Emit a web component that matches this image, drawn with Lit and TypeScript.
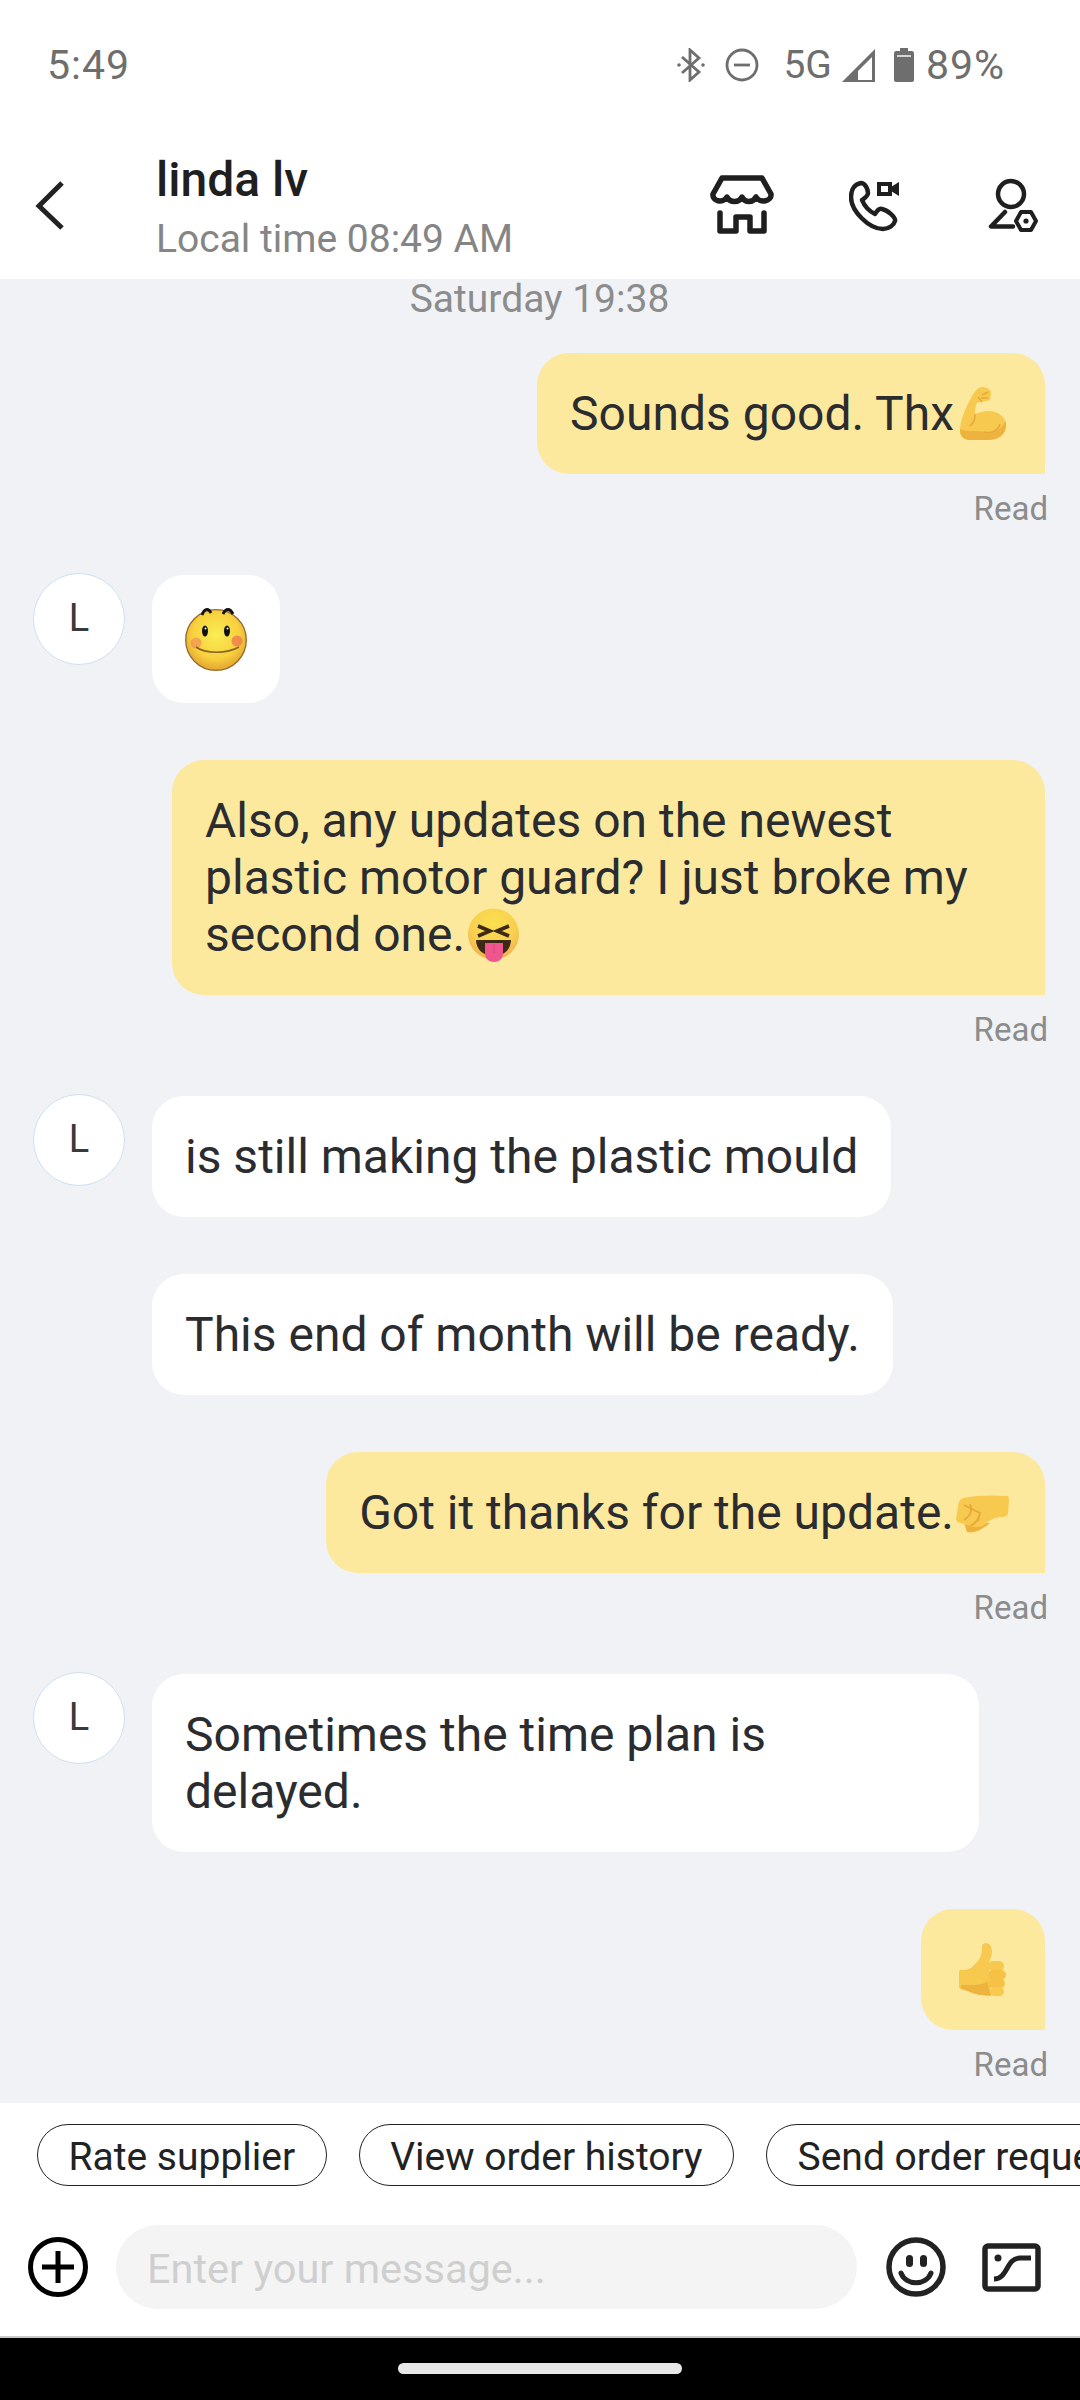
import { LitElement, html, css } from "lit";
import { customElement } from "lit/decorators.js";

const muscle = html`<svg class="emo" viewBox="0 0 58 57"><g transform="translate(6 2)">
<path fill="#f8c94f" d="M22 0C27 0 32 3 31 7L30 13C26 15 20 14 17 16C15 20 15 23 15 27C18 26 23 24 28 24C38 24 46 30 46 38C46 48 38 53 28 53L10 53C4 53 0 49 0 44C0 34 5 22 11 11C14 5 18 0 22 0Z"/>
<path fill="#eeb33f" d="M0 44C0 49 4 53 10 53L28 53C38 53 46 48 46 38C46 36 46 35 45 34C44 40 38 44 30 45L16 44C10 44 4 44 0 42Z"/>
<path fill="none" stroke="#e6a93c" stroke-width="1.6" d="M24 45C30 47 38 44 40 37M10 39C14 36 15 32 15 27M22 8L28 5M21 11L28 11M18 10L22 15"/></g></svg>`;

const tongue = html`<svg class="emo" viewBox="0 0 58 57"><defs><radialGradient id="tg" cx=".5" cy=".3" r=".75"><stop offset="0" stop-color="#fbe04f"/><stop offset=".6" stop-color="#f8cf50"/><stop offset="1" stop-color="#f0a94c"/></radialGradient></defs><g transform="translate(3 3)">
<circle cx="25.500" cy="25" r="25.500" fill="url(#tg)"/>
<path fill="none" stroke="#3e2a14" stroke-width="3.600" d="M10 17L22 22L10 27M41 17L29 22L41 27"/>
<path fill="#3e2a14" d="M8 31H43C43 40 36 47 25.500 47C15 47 8 40 8 31Z"/>
<path fill="#f0568e" d="M17 34H35V44C35 50 31 53 26 53C21 53 17 50 17 44Z"/>
<path stroke="#d3447a" stroke-width="1" d="M26 35V44"/></g></svg>`;

const fist = html`<svg class="emo" viewBox="0 0 58 57"><g transform="translate(2 11)">
<path fill="#eeb33f" d="M8 28L11 37C18 39 27 34 34 28Z"/>
<path fill="#f8c94f" d="M7 3C20 0 38 0 50 1C53 1 53 3 53 6L52 18C52 21 49 22 46 22C38 22 32 26 27 31C20 34 12 30 8 29C2 28 0 26 0 24C1 18 2 10 3 7C4 5 5 4 7 3Z"/>
<path fill="none" stroke="#e6a93c" stroke-width="1.800" d="M8 10L24 18C23 24 19 29 14 31M14 9C16 14 16 20 8 25M24 18L22 26"/></g></svg>`;

const thumb = html`<svg class="emo" viewBox="0 0 58 57"><g transform="translate(5 2)">
<path fill="#f8c94f" d="M27 0C31 0 33 4 33 9C33 13 31 16 30 20L32 52L22 52C14 51 8 47 2 46C0 46 0 44 0 42V29C0 27 1 27 2 27C8 27 12 26 15 22C21 17 23 12 23 4C23 1 25 0 27 0Z"/>
<path fill="#eeb33f" d="M2 46C8 47 14 51 22 52L32 53L28 38C24 43 12 42 2 42Z"/>
<rect x="29" y="18" width="16" height="10" rx="5" fill="#f8c94f"/>
<rect x="29" y="27" width="18" height="10" rx="5" fill="#f6c246"/>
<rect x="29" y="36" width="17" height="9" rx="4.500" fill="#f6c246"/>
<rect x="31" y="44" width="14" height="9" rx="4.500" fill="#f8c94f"/></g></svg>`;

const sticker = html`<svg class="sticker" viewBox="0 0 62 64"><defs><radialGradient id="sg" cx=".5" cy=".42" r=".6"><stop offset="0" stop-color="#f8ee55"/><stop offset=".65" stop-color="#f8d03e"/><stop offset="1" stop-color="#e0a030"/></radialGradient></defs>
<circle cx="31" cy="33" r="30.300" fill="url(#sg)" stroke="#96682a" stroke-width="1.300"/>
<circle cx="11" cy="36" r="5.500" fill="#f28a5a" opacity=".65"/><circle cx="52" cy="34" r="5.500" fill="#f07a50" opacity=".8"/>
<path fill="none" stroke="#111" stroke-width="2.800" d="M17 8C19 2 23 0 26 6M38 7C41 1 45 1 48 7"/>
<ellipse cx="20" cy="24" rx="3" ry="5.500" fill="#111"/><ellipse cx="42" cy="24" rx="3" ry="5.500" fill="#111"/>
<circle cx="20.500" cy="21.500" r="1" fill="#fff"/><circle cx="42.500" cy="21.500" r="1" fill="#fff"/>
<path fill="none" stroke="#8a6420" stroke-width="1.600" d="M11 40C20 47 42 47 54 40"/></svg>`;

@customElement("app-root")
export class AppRoot extends LitElement {
  static styles = css`
    :host { display: block; width: 1080px; height: 2400px; font-family: Roboto, "Liberation Sans", sans-serif; }
    .page { width: 1080px; height: 2400px; display: flex; flex-direction: column; background: #f0f2f6; overflow: hidden; }
    svg { display: block; flex: none; }

    .status { height: 130px; flex: none; background: #fff; display: flex; align-items: center; padding: 0 75px 0 47px; color: #6e6e6e; font-size: 41px; box-sizing: border-box; }
    .clock { margin-right: auto; letter-spacing: 1px; }
    .st-bt { margin-right: 20px; }
    .st-dnd { margin-right: 24px; }
    .st-5g { font-size: 39px; margin-right: 10px; }
    .st-sig { margin-right: 19px; }
    .st-bat { margin-right: 12px; }
    .st-pct { letter-spacing: 1px; }

    .head { height: 149px; flex: none; background: #fff; display: flex; box-sizing: border-box; padding: 0 42px 0 34px; }
    .back { width: 122px; padding-top: 51px; box-sizing: border-box; flex: none; }
    .who { display: flex; flex-direction: column; padding-top: 20px; }
    .name { font-size: 48px; font-weight: 500; line-height: 60px; color: #1f1f1f; }
    .local { font-size: 39px; line-height: 46px; margin-top: 6px; color: #858585; }
    .tools { margin-left: auto; display: flex; padding-top: 42px; height: 64px; }
    .t-store { margin-right: 75px; }
    .t-phone { margin-right: 87px; }

    .msgs { flex: 1; min-height: 0; display: flex; flex-direction: column; padding: 0 35px 0 33px; }
    .time { text-align: center; font-size: 39px; line-height: 46px; color: #8c8c8c; margin: -3px 0 31px 1px; }
    .out { display: flex; flex-direction: column; align-items: flex-end; }
    .in { display: flex; align-items: flex-start; }
    .gap-s { margin-bottom: 57px; }
    .gap-r { margin-bottom: 43px; }
    .avatar { width: 92px; height: 92px; flex: none; box-sizing: border-box; border-radius: 50%; background: #fff; border: 1px solid #cfe0ef; display: flex; align-items: center; justify-content: center; font-size: 38px; color: #3a3a3a; padding-bottom: 2px; }
    .in .bubble { margin-top: 2px; margin-left: 27px; }
    .indent { margin-left: 119px; display: flex; }
    .bubble { box-sizing: border-box; padding: 32px 33px; font-size: 48px; line-height: 57px; color: #2b2c30; border-radius: 32px; background: #fff; }
    .out .bubble { background: #fce99e; border-bottom-right-radius: 0; }
    .wide { width: 827px; }
    .big { width: 873px; }
    .pic { width: 128px; height: 128px; padding: 32px 0 0 33px; }
    .sticker { width: 62px; height: 64px; }
    .emo { display: inline-block; width: 58px; height: 57px; vertical-align: top; }
    .read { font-size: 33px; line-height: 42px; margin: 14px -3px 0 0; color: #8c8c8c; }

    .foot { flex: none; background: #fff; padding-top: 21px; }
    .chips { display: flex; gap: 32px; padding-left: 37px; overflow: hidden; }
    .chip { flex: none; box-sizing: border-box; height: 62px; border: 1.500px solid #222; border-radius: 31px; padding: 0 30.500px; font-size: 39px; line-height: 64px; color: #222; white-space: nowrap; background: #fff; }
    .row { display: flex; align-items: center; padding: 39px 0 27px 28px; }
    .input { width: 741px; height: 84px; margin: 0 29px 0 28px; box-sizing: border-box; border-radius: 42px; background: #f4f4f4; color: #cfcfcf; font-size: 41.500px; line-height: 88px; padding-left: 31px; }
    .t-emoji { margin-right: 36px; }

    .nav { flex: none; height: 64px; background: #000; border-top: 2px solid #c9c9c9; box-sizing: border-box; display: flex; justify-content: center; padding-top: 25px; }
    .pill { width: 284px; height: 11px; border-radius: 6px; background: #e8e8e8; }
  `;

  render() {
    return html`<div class="page">
      <div class="status">
        <span class="clock">5:49</span>
        <svg class="st-bt" width="28" height="34" viewBox="0 0 28 34" fill="none" stroke="#6e6e6e" stroke-width="2.800"><path d="M5 9L22 24L13 32V2L22 10L5 25"/><circle cx="2" cy="17" r="1.800" fill="#6e6e6e" stroke="none"/><circle cx="26" cy="17" r="1.800" fill="#6e6e6e" stroke="none"/></svg>
        <svg class="st-dnd" width="34" height="34" viewBox="0 0 34 34" fill="none" stroke="#6e6e6e" stroke-width="2.800"><circle cx="17" cy="17" r="15"/><path d="M9 17H25"/></svg>
        <span class="st-5g">5G</span>
        <svg class="st-sig" width="33" height="33" viewBox="0 0 33 33"><path fill="#6e6e6e" d="M0 33L33 0V33ZM16 31H30V8L16 22Z" fill-rule="evenodd"/><path fill="#fff" d="M18 21L30 9V22H18Z"/></svg>
        <svg class="st-bat" width="20" height="34" viewBox="0 0 20 34"><path fill="#6e6e6e" d="M6 0H14V3H18C19 3 20 4 20 5V32C20 33 19 34 18 34H2C1 34 0 33 0 32V5C0 4 1 3 2 3H6Z"/><rect x="3" y="7" width="14" height="2" fill="#fff" opacity=".7"/></svg>
        <span class="st-pct">89%</span>
      </div>

      <div class="head">
        <div class="back"><svg width="32" height="50" viewBox="0 0 32 50" fill="none" stroke="#222" stroke-width="5"><path d="M28 2L5 25L28 47"/></svg></div>
        <div class="who"><div class="name">linda lv</div><div class="local">Local time 08:49 AM</div></div>
        <div class="tools">
          <svg class="t-store" width="64" height="64" viewBox="0 0 64 64" fill="none" stroke="#1f1f1f" stroke-width="5.500" stroke-linejoin="round" stroke-linecap="round"><g transform="translate(0 3)"><path d="M12 3H52L61 19C62 26 50 29 46 22C43 28 35 28 32 22C29 28 20 28 17 22C13 29 2 26 3 19Z"/><path d="M10 38V56H26V42H40V56H54V38"/></g></svg>
          <svg class="t-phone" width="52" height="64" viewBox="0 0 52 64" fill="none" stroke="#1f1f1f" stroke-width="4.500"><g transform="translate(0 9)"><path stroke-linejoin="round" d="M12 2C6 3 2 8 2 16C2 30 20 48 34 48C40 48 45 44 46 40C47 36 38 29 33 28C30 27 28 30 26 33C20 30 15 24 13 19C16 17 19 15 19 12C19 8 16 2 12 2Z"/><rect x="30" y="3" width="11" height="10" stroke-width="4"/><path fill="#1f1f1f" stroke="none" d="M42 6L50 1V15L42 10Z"/></g></svg>
          <svg width="50" height="64" viewBox="0 0 50 64" fill="none" stroke="#1f1f1f" stroke-width="4.500" stroke-linecap="round" stroke-linejoin="round"><g transform="translate(0 7)"><circle cx="23" cy="15" r="13"/><path d="M17 33L3 47.500H25"/><path stroke-width="4" d="M33 33H43L48 42L43 51H33L28 42Z"/><circle cx="38" cy="42" r="2.600" fill="#1f1f1f" stroke="none"/></g></svg>
        </div>
      </div>

      <div class="msgs">
        <div class="time">Saturday 19:38</div>

        <div class="out gap-r"><div class="bubble">Sounds good. Thx${muscle}</div><div class="read">Read</div></div>

        <div class="in gap-s"><div class="avatar">L</div><div class="bubble pic">${sticker}</div></div>

        <div class="out gap-r"><div class="bubble big">Also, any updates on the newest<br>plastic motor guard? I just broke my<br>second one.${tongue}</div><div class="read">Read</div></div>

        <div class="in gap-s"><div class="avatar">L</div><div class="bubble">is still making the plastic mould</div></div>
        <div class="gap-s indent"><div class="bubble">This end of month will be ready.</div></div>

        <div class="out gap-r"><div class="bubble">Got it thanks for the update.${fist}</div><div class="read">Read</div></div>

        <div class="in gap-s"><div class="avatar">L</div><div class="bubble wide">Sometimes the time plan is<br>delayed.</div></div>

        <div class="out"><div class="bubble">${thumb}</div><div class="read">Read</div></div>
      </div>

      <div class="foot">
        <div class="chips">
          <div class="chip">Rate supplier</div>
          <div class="chip">View order history</div>
          <div class="chip">Send order request</div>
        </div>
        <div class="row">
          <svg width="60" height="60" viewBox="0 0 60 60" fill="none" stroke="#000" stroke-width="5"><circle cx="30" cy="30" r="27.500"/><path d="M30 14V46M14 30H46"/></svg>
          <div class="input">Enter your message...</div>
          <svg class="t-emoji" width="60" height="60" viewBox="0 0 60 60" fill="none" stroke="#222" stroke-width="5.500"><circle cx="30" cy="30" r="27"/><path stroke-linecap="round" d="M15 36C20 49 40 49 45 36" stroke-width="5"/><rect x="20" y="18" width="7" height="12" rx="3.500" fill="#222" stroke="none"/><rect x="34" y="18" width="7" height="12" rx="3.500" fill="#222" stroke="none"/></svg>
          <svg width="59" height="49" viewBox="0 0 59 49" fill="none" stroke="#222" stroke-width="5.500"><rect x="3" y="3" width="53" height="43" rx="3"/><path d="M12 36C26 36 24 15 38 15H49" stroke-width="5"/><circle cx="16" cy="15" r="3.500" fill="#222" stroke="none"/></svg>
        </div>
      </div>

      <div class="nav"><div class="pill"></div></div>
    </div>`;
  }
}
